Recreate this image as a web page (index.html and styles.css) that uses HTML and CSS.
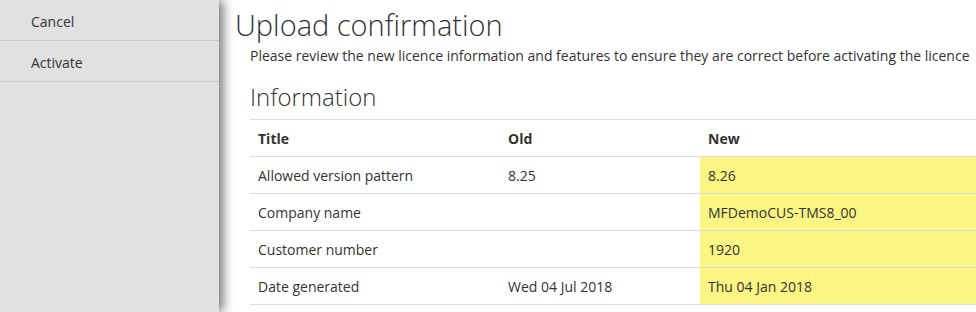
FILE: index.html
```html
<!DOCTYPE html>
<html lang="en">

<head>
    <meta charset="UTF-8">
    <title>Upload confirmation</title>
    <link rel="stylesheet" href="styles.css">
</head>

<body>
    <main>
        <div class="sidebar">
            <button class="item">Cancel</button>
            <button class="item">Activate</button>
        </div>
        <div class="content">
            <h1 class="title">Upload confirmation</h1>
            <p class="intro">Please review the new licence information and features to ensure they are correct before activating the licence</p>
            <h2 class="section">Information</h2>
            <table class="info">
                <thead>
                    <tr>
                        <th class="col-title">Title</th>
                        <th class="col-old">Old</th>
                        <th class="col-new">New</th>
                    </tr>
                </thead>
                <tbody>
                    <tr>
                        <td>Allowed version pattern</td>
                        <td>8.25</td>
                        <td class="changed">8.26</td>
                    </tr>
                    <tr>
                        <td>Company name</td>
                        <td></td>
                        <td class="changed">MFDemoCUS-TMS8_00</td>
                    </tr>
                    <tr>
                        <td>Customer number</td>
                        <td></td>
                        <td class="changed">1920</td>
                    </tr>
                    <tr>
                        <td>Date generated</td>
                        <td>Wed 04 Jul 2018</td>
                        <td class="changed">Thu 04 Jan 2018</td>
                    </tr>
                </tbody>
            </table>
        </div>
    </main>
</body>

</html>
```

FILE: styles.css
```css
html,
body {
    margin: 0;
    font-family: "Open Sans", sans-serif;
    background-color: var(--background-color);
    color: var(--text-color);
    overflow: hidden;
}

:root {
    --text-color: #333;
    --background-color: #fff;
    --sidebar-color: #e1e1e1;
    --sidebar-border: #c8c8c8;
    --table-border: #dcdcdc;
    --changed-color: #fbf584;
}

main {
    display: grid;
    grid-template-columns: 219px 1fr;
    height: 312px;
}

.sidebar {
    background-color: var(--sidebar-color);
    box-shadow: 4px 0 10px rgba(0, 0, 0, 0.55);
    position: relative;
    z-index: 1;
    display: flex;
    flex-direction: column;
}

.sidebar .item {
    height: 41px;
    padding: 2px 0 0 31px;
    border: none;
    border-bottom: 1px solid var(--sidebar-border);
    background: transparent;
    text-align: left;
    font-family: inherit;
    font-size: 14px;
    color: var(--text-color);
    cursor: pointer;
}

.content {
    padding: 0 0 0 16px;
    overflow: hidden;
}

.content .title {
    font-size: 29px;
    font-weight: 300;
    margin: 7px 0 0 0;
    line-height: 36px;
}

.content .intro {
    font-size: 14px;
    margin: 3px 0 0 15px;
    line-height: 20px;
}

.content .section {
    font-size: 24px;
    font-weight: 300;
    margin: 15px 0 0 15px;
    line-height: 32px;
}

.info {
    margin: 6px 0 0 15px;
    border-collapse: collapse;
    table-layout: fixed;
    width: 780px;
    font-size: 14px;
}

.info th,
.info td {
    text-align: left;
    padding: 0 8px;
    height: 36px;
    border-top: 1px solid var(--table-border);
    border-bottom: 1px solid var(--table-border);
}

.info th {
    font-weight: bold;
}

.info .col-title {
    width: 234px;
}

.info .col-old {
    width: 184px;
}

.info .changed {
    background-color: var(--changed-color);
}
```
